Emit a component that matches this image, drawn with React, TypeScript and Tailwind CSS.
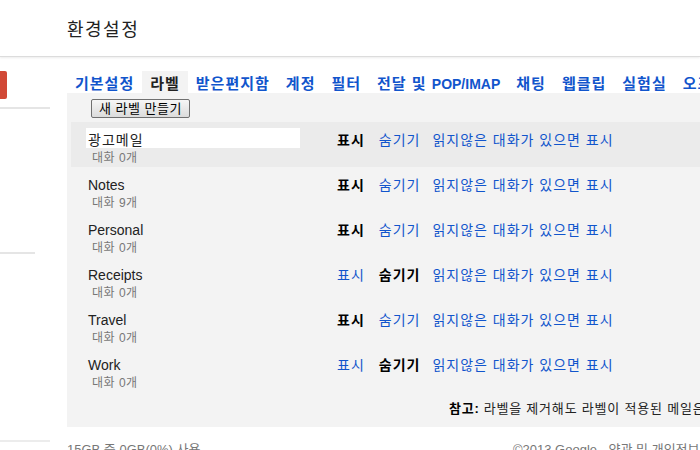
import React from "react";

const FONT = { fontFamily: '"Liberation Sans", "Noto Sans CJK KR", sans-serif' };

type Tab = { ko: string; en?: string };
const tabs: Tab[] = [
  { ko: "기본설정" },
  { ko: "라벨" },
  { ko: "받은편지함" },
  { ko: "계정" },
  { ko: "필터" },
  { ko: "전달 및 ", en: "POP/IMAP" },
  { ko: "채팅" },
  { ko: "웹클립" },
  { ko: "실험실" },
  { ko: "오프라인" },
  { ko: "테마" },
];

type Row = { name: string; count: string; hidden: boolean; edit?: boolean; ko?: boolean };
const rows: Row[] = [
  { name: "광고메일", count: "대화 0개", hidden: false, edit: true, ko: true },
  { name: "Notes", count: "대화 9개", hidden: false },
  { name: "Personal", count: "대화 0개", hidden: false },
  { name: "Receipts", count: "대화 0개", hidden: true },
  { name: "Travel", count: "대화 0개", hidden: false },
  { name: "Work", count: "대화 0개", hidden: true },
];

export default function App() {
  return (
    <div className="w-[700px] h-[450px] overflow-hidden bg-white text-black" style={FONT}>
      <header className="h-[57px] flex items-center pt-[4px] pl-[67px] border-b border-[#dcdcdc] shadow-[0_1px_2px_rgba(0,0,0,0.08)]">
        <span className="text-[18px] tracking-[1.5px] text-[#222]">환경설정</span>
      </header>
      <div className="flex">
        <aside className="w-[67px] shrink-0 flex flex-col">
          <div className="mt-[14px] h-[28px] w-[7px] bg-[#d14836] rounded-r-[2px]" />
          <div className="mt-[8px] h-[2px] w-[50px] bg-[#e5e5e5]" />
          <div className="mt-[143px] h-[2px] w-[35px] bg-[#e5e5e5]" />
          <div className="mt-[186px] h-[2px] w-[50px] bg-[#ececec]" />
        </aside>
        <main className="w-[1000px] shrink-0 pt-[14px]">
          <nav className="flex h-[22px]">
            {tabs.map((t, i) => (
              <div
                key={t.ko}
                className={
                  "px-2 h-[22px] pt-[4px] flex items-center text-[15px] font-bold whitespace-nowrap " +
                  (i === 1 ? "bg-[#f3f3f3] text-[#222]" : "text-[#1155cc]")
                }
              >
                <span className="tracking-[1px] whitespace-pre">{t.ko}</span>
                {t.en && <span className="text-[14px] tracking-normal">{t.en}</span>}
              </div>
            ))}
          </nav>
          <section className="bg-[#f3f3f3] pb-[9px]">
            <div className="pt-[6px] pl-[24px]">
              <button className="h-[19px] w-[99px] border border-[#707070] rounded-[2px] bg-gradient-to-b from-[#f6f6f6] to-[#dcdcdc] text-[13px] tracking-[0.5px] leading-none text-black flex items-center justify-center">
                새 라벨 만들기
              </button>
            </div>
            <div className="mt-[4px] px-[4px] w-[700px]">
              {rows.map((r, i) => (
                <div key={r.name} className={"h-[45px] flex " + (i === 0 ? "bg-[#ebebeb]" : "")}>
                  <div className="w-[266px] shrink-0 pl-[15px] pt-[6px]">
                    <div
                      className={
                        "h-[20px] pl-[2px] pt-[4px] flex items-center text-[14px] text-[#222] " +
                        (r.edit ? "w-[214px] bg-white " : "") +
                        (r.ko ? "tracking-[1px]" : "")
                      }
                    >
                      {r.name}
                    </div>
                    <div className="h-[16px] mt-[2px] pl-[6px] flex items-center text-[12px] tracking-[0.5px] text-[#777]">{r.count}</div>
                  </div>
                  <div className="pt-[6px] h-[26px] flex items-start">
                    <div className="h-[20px] pt-[4px] flex items-center text-[14px] tracking-[1px] whitespace-nowrap">
                      <span className={"mr-[14px] " + (r.hidden ? "text-[#1155cc]" : "font-bold text-black")}>표시</span>
                      <span className={"mr-[12px] " + (r.hidden ? "font-bold text-black" : "text-[#1155cc]")}>숨기기</span>
                      <span className="text-[#1155cc]">읽지않은 대화가 있으면 표시</span>
                    </div>
                  </div>
                </div>
              ))}
            </div>
            <div className="pt-[8px] pl-[382px] h-[26px] flex items-center text-[13px] tracking-[0.8px] whitespace-nowrap text-[#222]">
              <span className="font-bold text-black mr-[4px]">참고:</span>
              라벨을 제거해도 라벨이 적용된 메일은 삭제되지 않습니다.
            </div>
          </section>
          <footer className="mt-[13px] flex text-[13px] text-[#777] whitespace-nowrap">
            <span className="w-[446px]">15GB 중 0GB(0%) 사용</span>
            <span>©2013 Google - 약관 및 개인정보 보호</span>
          </footer>
        </main>
      </div>
    </div>
  );
}
